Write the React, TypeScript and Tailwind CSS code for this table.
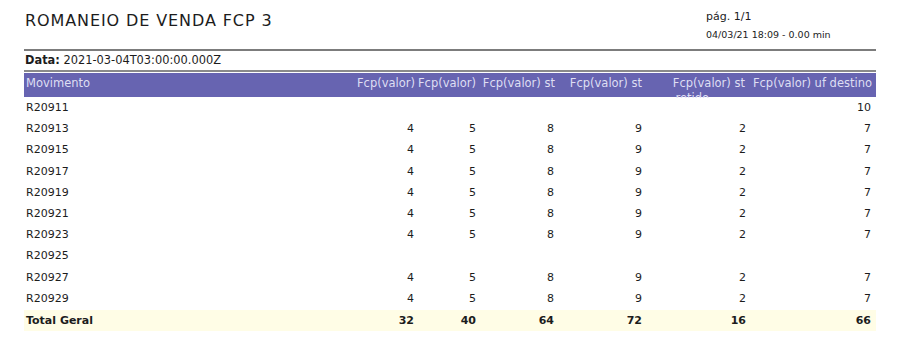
import React from "react";

const rows: { id: string; v: (number | null)[] }[] = [
  { id: "R20911", v: [null, null, null, null, null, 10] },
  { id: "R20913", v: [4, 5, 8, 9, 2, 7] },
  { id: "R20915", v: [4, 5, 8, 9, 2, 7] },
  { id: "R20917", v: [4, 5, 8, 9, 2, 7] },
  { id: "R20919", v: [4, 5, 8, 9, 2, 7] },
  { id: "R20921", v: [4, 5, 8, 9, 2, 7] },
  { id: "R20923", v: [4, 5, 8, 9, 2, 7] },
  { id: "R20925", v: [null, null, null, null, null, null] },
  { id: "R20927", v: [4, 5, 8, 9, 2, 7] },
  { id: "R20929", v: [4, 5, 8, 9, 2, 7] },
];

const totals = [32, 40, 64, 72, 16, 66];

const grid = "grid grid-cols-[330px_62px_62px_78px_88px_104px_125px]";

export default function App() {
  return (
    <div
      className="w-[900px] h-[345px] bg-white text-[#1c1c1c] overflow-hidden"
      style={{ fontFamily: '"DejaVu Sans", Verdana, sans-serif' }}
    >
      <div className="px-[24px]">
        {/* Header */}
        <div className="flex h-[49px]">
          <div className="flex-1 pl-[1px] pt-[11px] text-[16px] leading-[20px] tracking-[0.9px]">
            ROMANEIO DE VENDA FCP 3
          </div>
          <div className="w-[170px] flex flex-col">
            <div className="pt-[10px] text-[11px] leading-[13px]">pág. 1/1</div>
            <div className="mt-[6px] text-[9.5px] leading-[12px]">04/03/21 18:09 - 0.00 min</div>
          </div>
        </div>
        <div className="h-[2px] bg-[#7c7c7c]" />
        <div className="h-[19px] pl-[1px] text-[11.4px] leading-[19px]">
          <span className="font-bold">Data:</span> 2021-03-04T03:00:00.000Z
        </div>
        <div className="h-[2px] bg-[#8a8a8a]" />
        <div className="h-[1px]" />

        {/* Column headers */}
        <div className="h-[25px] overflow-hidden">
          <div className={`${grid} h-[24px] bg-[#6764b1] text-[#dedef3] text-[11.5px] leading-[15px]`}>
            <div className="pl-[2px] pt-[3px] whitespace-nowrap">Movimento</div>
            <div className="pr-[1px] pt-[3px] text-right whitespace-nowrap">Fcp(valor)</div>
            <div className="pr-[2px] pt-[3px] text-right whitespace-nowrap">Fcp(valor)</div>
            <div className="pr-[1px] pt-[3px] text-right whitespace-nowrap">Fcp(valor) st</div>
            <div className="pr-[2px] pt-[3px] text-right whitespace-nowrap">Fcp(valor) st</div>
            <div className="pr-[3px] pt-[3px] text-right">
              Fcp(valor) st
              <br />
              <span className="pr-[36px]">retido</span>
            </div>
            <div className="pr-[1px] pt-[3px] text-right whitespace-nowrap">Fcp(valor) uf destino</div>
          </div>
        </div>

        {/* Rows */}
        {rows.map((r) => (
          <div key={r.id} className={`${grid} h-[21.2px] items-center text-[11px] leading-[13px] pb-[2px]`}>
            <div className="pl-[2px]">{r.id}</div>
            {r.v.map((n, i) => (
              <div key={i} className="pr-[2px] text-right">
                {n ?? ""}
              </div>
            ))}
          </div>
        ))}
        <div className={`${grid} h-[21px] items-center bg-[#fffde6] text-[11px] leading-[13px] font-bold`}>
          <div className="pl-[2px]">Total Geral</div>
          {totals.map((n, i) => (
            <div key={i} className="pr-[2px] text-right">
              {n}
            </div>
          ))}
        </div>
      </div>
    </div>
  );
}
